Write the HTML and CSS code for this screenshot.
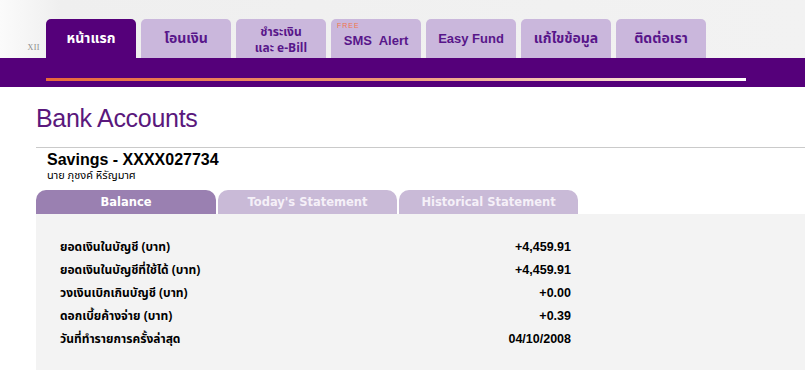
FILE: index.html
```html
<!DOCTYPE html>
<html lang="th">
<head>
    <meta charset="UTF-8">
    <title>Bank Accounts</title>
    <link rel="stylesheet" href="styles.css">
</head>
<body>
    <!-- Top menu -->
    <div class="header">
        <div class="xii">XII</div>
        <div class="menu">
            <div class="menu-item active">หน้าแรก</div>
            <div class="menu-item">โอนเงิน</div>
            <div class="menu-item two-line"><span>ชำระเงิน</span><span>และ e-Bill</span></div>
            <div class="menu-item sms"><span class="free">FREE</span>SMS&nbsp; Alert</div>
            <div class="menu-item latin">Easy Fund</div>
            <div class="menu-item">แก้ไขข้อมูล</div>
            <div class="menu-item">ติดต่อเรา</div>
        </div>
    </div>
    <div class="band">
        <div class="band-line"></div>
    </div>

    <!-- Content -->
    <div class="content">
        <h1>Bank Accounts</h1>

        <div class="account">
            <div class="account-no">Savings - XXXX027734</div>
            <div class="account-name">นาย ภุชงค์ หิรัญมาศ</div>
        </div>

        <div class="sub-tabs">
            <div class="sub-tab active">Balance</div>
            <div class="sub-tab">Today's Statement</div>
            <div class="sub-tab">Historical Statement</div>
        </div>

        <div class="panel">
            <div class="row"><span class="label">ยอดเงินในบัญชี (บาท)</span><span class="value">+4,459.91</span></div>
            <div class="row"><span class="label">ยอดเงินในบัญชีที่ใช้ได้ (บาท)</span><span class="value">+4,459.91</span></div>
            <div class="row"><span class="label">วงเงินเบิกเกินบัญชี (บาท)</span><span class="value">+0.00</span></div>
            <div class="row"><span class="label">ดอกเบี้ยค้างจ่าย (บาท)</span><span class="value">+0.39</span></div>
            <div class="row"><span class="label">วันที่ทำรายการครั้งล่าสุด</span><span class="value">04/10/2008</span></div>
        </div>
    </div>
</body>
</html>
```

FILE: styles.css
```css
body {
    margin: 0;
    background-color: white;
    color: black;
    font-family: "Liberation Sans", Arial, sans-serif;
}

/* Header with menu tabs */
.header {
    display: flex;
    align-items: flex-end;
    height: 58px;
    background: linear-gradient(to right, #fbfbfb 0px, #efefef 60px, #f2f2f2 100%);
}

.xii {
    width: 40px;
    padding-right: 6px;
    margin-bottom: 6px;
    text-align: right;
    font-family: "Liberation Serif", serif;
    font-size: 8px;
    color: #8a8a8a;
    letter-spacing: 0.5px;
}

.menu {
    display: flex;
    gap: 5px;
}

.menu-item {
    position: relative;
    display: flex;
    align-items: center;
    justify-content: center;
    width: 90px;
    height: 39px;
    border-radius: 5px 5px 0 0;
    background-color: #cab7dc;
    color: #58168a;
    font-family: Tahoma, "Noto Sans Thai", "Liberation Sans", sans-serif;
    font-weight: bold;
    font-size: 14px;
    text-align: center;
}

.menu-item.active {
    background-color: #55007a;
    color: white;
}

.menu-item.two-line {
    flex-direction: column;
    font-size: 12px;
    line-height: 16px;
    padding-top: 3px;
    box-sizing: border-box;
}

.menu-item.latin,
.menu-item.sms {
    font-family: "Liberation Sans", Arial, sans-serif;
    font-size: 13px;
}

.menu-item.sms {
    padding-top: 4px;
    box-sizing: border-box;
}

.free {
    position: absolute;
    top: 3px;
    left: 6px;
    font-size: 7px;
    font-weight: normal;
    letter-spacing: 1px;
    color: #f0744a;
}

/* Purple band under menu */
.band {
    height: 29px;
    background-color: #55007a;
    padding: 20px 0 0 46px;
    box-sizing: border-box;
}

.band-line {
    width: 700px;
    height: 3px;
    background: linear-gradient(to right, #e8673a, #f09a78 50%, #f8d6c8 80%, #ffffff);
}

/* Content */
.content {
    padding-left: 36px;
}

h1 {
    margin: 16px 0 0 0;
    padding-bottom: 14px;
    border-bottom: 1px solid #cacaca;
    font-size: 25px;
    line-height: 30px;
    font-weight: normal;
    color: #5a187c;
    letter-spacing: -0.3px;
}

.account {
    padding: 2px 0 0 11px;
    height: 40px;
}

.account-no {
    font-size: 16px;
    font-weight: bold;
    line-height: 20px;
}

.account-name {
    font-family: Tahoma, "Noto Sans Thai", "Liberation Sans", sans-serif;
    font-size: 11px;
    line-height: 12px;
}

/* Balance tabs */
.sub-tabs {
    display: flex;
    gap: 2px;
}

.sub-tab {
    width: 179px;
    height: 24px;
    line-height: 25px;
    border-radius: 10px 10px 0 0;
    background-color: #c9bad7;
    color: #f5f0f8;
    text-align: center;
    font-family: "DejaVu Sans", Verdana, sans-serif;
    font-size: 11.5px;
    font-weight: bold;
}

.sub-tab.active {
    width: 180px;
    background-color: #9a80b1;
    color: white;
}

.panel {
    background-color: #f3f3f3;
    padding: 21px 0 30px 24px;
    min-height: 110px;
}

.row {
    display: flex;
    width: 511px;
    height: 23px;
    align-items: center;
}

.label {
    flex: 1;
    font-family: Tahoma, "Noto Sans Thai", "Liberation Sans", sans-serif;
    font-size: 12px;
    font-weight: bold;
}

.value {
    font-size: 12.5px;
    font-weight: bold;
}
```
